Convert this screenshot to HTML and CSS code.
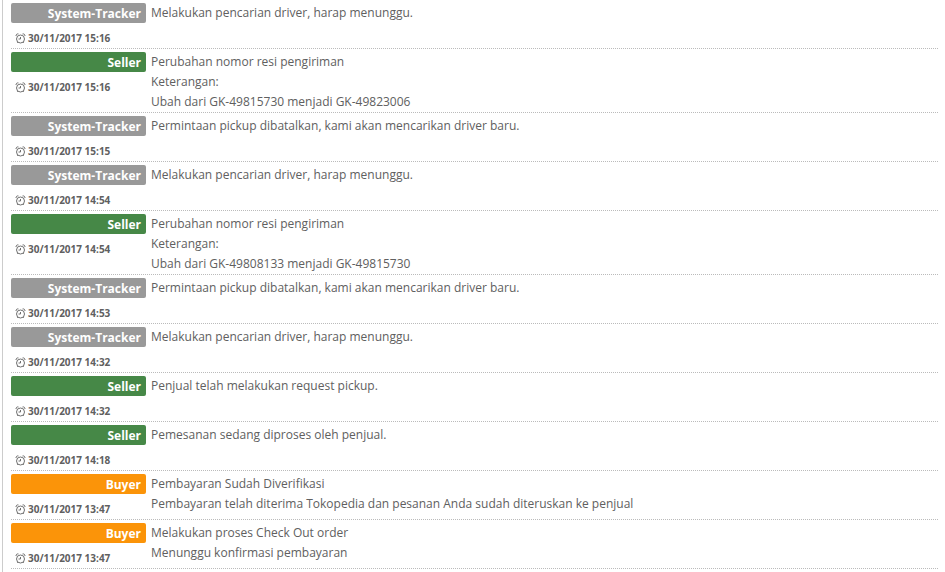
FILE: index.html
```html
<!DOCTYPE html>
<html lang="id">
<head>
  <meta charset="UTF-8">
  <meta name="viewport" content="width=device-width, initial-scale=1.0">
  <title>Riwayat Status Pesanan</title>
  <link rel="stylesheet" href="styles.css">
</head>
<body>

<svg class="sprite" aria-hidden="true">
  <symbol id="clock" viewBox="0 0 22 22">
    <circle cx="11" cy="12" r="8" />
    <path d="M11 8v4H7M2 6C2 3 4 1 7 2M20 6c0-3-2-5-5-4M6 18l-1 2M16 18l1 2" />
  </symbol>
</svg>

<ul class="history">
  <li class="entry">
    <div class="meta">
      <span class="label system">System-Tracker</span>
      <time class="date" datetime="2017-11-30T15:16"><svg class="icon"><use href="#clock" /></svg>30/11/2017 15:16</time>
    </div>
    <p class="message">Melakukan pencarian driver, harap menunggu.</p>
  </li>
  <li class="entry">
    <div class="meta">
      <span class="label seller">Seller</span>
      <time class="date" datetime="2017-11-30T15:16"><svg class="icon"><use href="#clock" /></svg>30/11/2017 15:16</time>
    </div>
    <p class="message">Perubahan nomor resi pengiriman<br>Keterangan:<br>Ubah dari GK-49815730 menjadi GK-49823006</p>
  </li>
  <li class="entry">
    <div class="meta">
      <span class="label system">System-Tracker</span>
      <time class="date" datetime="2017-11-30T15:15"><svg class="icon"><use href="#clock" /></svg>30/11/2017 15:15</time>
    </div>
    <p class="message">Permintaan pickup dibatalkan, kami akan mencarikan driver baru.</p>
  </li>
  <li class="entry">
    <div class="meta">
      <span class="label system">System-Tracker</span>
      <time class="date" datetime="2017-11-30T14:54"><svg class="icon"><use href="#clock" /></svg>30/11/2017 14:54</time>
    </div>
    <p class="message">Melakukan pencarian driver, harap menunggu.</p>
  </li>
  <li class="entry">
    <div class="meta">
      <span class="label seller">Seller</span>
      <time class="date" datetime="2017-11-30T14:54"><svg class="icon"><use href="#clock" /></svg>30/11/2017 14:54</time>
    </div>
    <p class="message">Perubahan nomor resi pengiriman<br>Keterangan:<br>Ubah dari GK-49808133 menjadi GK-49815730</p>
  </li>
  <li class="entry">
    <div class="meta">
      <span class="label system">System-Tracker</span>
      <time class="date" datetime="2017-11-30T14:53"><svg class="icon"><use href="#clock" /></svg>30/11/2017 14:53</time>
    </div>
    <p class="message">Permintaan pickup dibatalkan, kami akan mencarikan driver baru.</p>
  </li>
  <li class="entry">
    <div class="meta">
      <span class="label system">System-Tracker</span>
      <time class="date" datetime="2017-11-30T14:32"><svg class="icon"><use href="#clock" /></svg>30/11/2017 14:32</time>
    </div>
    <p class="message">Melakukan pencarian driver, harap menunggu.</p>
  </li>
  <li class="entry">
    <div class="meta">
      <span class="label seller">Seller</span>
      <time class="date" datetime="2017-11-30T14:32"><svg class="icon"><use href="#clock" /></svg>30/11/2017 14:32</time>
    </div>
    <p class="message">Penjual telah melakukan request pickup.</p>
  </li>
  <li class="entry">
    <div class="meta">
      <span class="label seller">Seller</span>
      <time class="date" datetime="2017-11-30T14:18"><svg class="icon"><use href="#clock" /></svg>30/11/2017 14:18</time>
    </div>
    <p class="message">Pemesanan sedang diproses oleh penjual.</p>
  </li>
  <li class="entry">
    <div class="meta">
      <span class="label buyer">Buyer</span>
      <time class="date" datetime="2017-11-30T13:47"><svg class="icon"><use href="#clock" /></svg>30/11/2017 13:47</time>
    </div>
    <p class="message">Pembayaran Sudah Diverifikasi<br>Pembayaran telah diterima Tokopedia dan pesanan Anda sudah diteruskan ke penjual</p>
  </li>
  <li class="entry">
    <div class="meta">
      <span class="label buyer">Buyer</span>
      <time class="date" datetime="2017-11-30T13:47"><svg class="icon"><use href="#clock" /></svg>30/11/2017 13:47</time>
    </div>
    <p class="message">Melakukan proses Check Out order<br>Menunggu konfirmasi pembayaran</p>
  </li>
</ul>

</body>
</html>
```
FILE: styles.css
```css
body {
  margin: 0;
  background: #fff;
  color: #606060;
  font-family: "Open Sans", sans-serif;
  font-size: 12px;
  line-height: 20px;
}

.sprite {
  display: none;
}

.history {
  margin: 0 0 0 2px;
  padding: 0 7px 3px 8px;
  border-left: 1px solid #ccc;
  list-style: none;
}

.entry {
  display: flex;
  gap: 5px;
  padding-top: 3px;
  border-bottom: 1px dotted #bbb;
}

.meta {
  flex: none;
  width: 135px;
}

.label {
  display: block;
  padding: 2px 5px 0;
  border-radius: 2px;
  color: #fff;
  font-weight: 700;
  line-height: 18px;
  text-align: right;
}

.system {
  background: #999;
}

.seller {
  background: #468847;
}

.buyer {
  background: #fb9409;
}

.date {
  display: flex;
  align-items: center;
  gap: 2px;
  padding: 5px 0 0 4px;
  font-size: 10px;
  font-weight: 700;
}

.icon {
  width: 11px;
  height: 11px;
  fill: none;
  stroke: #707070;
  stroke-width: 2;
}

.message {
  margin: 0;
}
```
